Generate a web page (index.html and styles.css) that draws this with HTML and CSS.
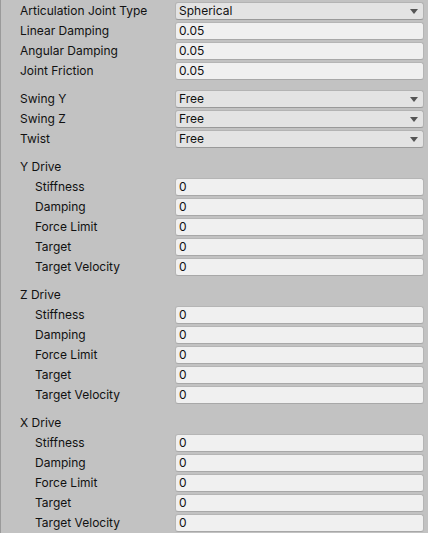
FILE: index.html
```html
<!DOCTYPE html>
<html>
<head>
<meta charset="utf-8">
<link rel="stylesheet" href="styles.css">
</head>
<body>
<div class="panel">
  <div class="group">
    <div class="row"><span class="label">Articulation Joint Type</span><div class="field drop"><span>Spherical</span><i class="arrow"></i></div></div>
    <div class="row"><span class="label">Linear Damping</span><div class="field"><span>0.05</span></div></div>
    <div class="row"><span class="label">Angular Damping</span><div class="field"><span>0.05</span></div></div>
    <div class="row"><span class="label">Joint Friction</span><div class="field"><span>0.05</span></div></div>
  </div>
  <div class="group">
    <div class="row"><span class="label">Swing Y</span><div class="field drop"><span>Free</span><i class="arrow"></i></div></div>
    <div class="row"><span class="label">Swing Z</span><div class="field drop"><span>Free</span><i class="arrow"></i></div></div>
    <div class="row"><span class="label">Twist</span><div class="field drop"><span>Free</span><i class="arrow"></i></div></div>
  </div>
  <div class="group">
    <div class="row"><span class="label">Y Drive</span></div>
    <div class="row sub"><span class="label">Stiffness</span><div class="field"><span>0</span></div></div>
    <div class="row sub"><span class="label">Damping</span><div class="field"><span>0</span></div></div>
    <div class="row sub"><span class="label">Force Limit</span><div class="field"><span>0</span></div></div>
    <div class="row sub"><span class="label">Target</span><div class="field"><span>0</span></div></div>
    <div class="row sub"><span class="label">Target Velocity</span><div class="field"><span>0</span></div></div>
  </div>
  <div class="group">
    <div class="row"><span class="label">Z Drive</span></div>
    <div class="row sub"><span class="label">Stiffness</span><div class="field"><span>0</span></div></div>
    <div class="row sub"><span class="label">Damping</span><div class="field"><span>0</span></div></div>
    <div class="row sub"><span class="label">Force Limit</span><div class="field"><span>0</span></div></div>
    <div class="row sub"><span class="label">Target</span><div class="field"><span>0</span></div></div>
    <div class="row sub"><span class="label">Target Velocity</span><div class="field"><span>0</span></div></div>
  </div>
  <div class="group">
    <div class="row"><span class="label">X Drive</span></div>
    <div class="row sub"><span class="label">Stiffness</span><div class="field"><span>0</span></div></div>
    <div class="row sub"><span class="label">Damping</span><div class="field"><span>0</span></div></div>
    <div class="row sub"><span class="label">Force Limit</span><div class="field"><span>0</span></div></div>
    <div class="row sub"><span class="label">Target</span><div class="field"><span>0</span></div></div>
    <div class="row sub"><span class="label">Target Velocity</span><div class="field"><span>0</span></div></div>
  </div>
</div>
</body>
</html>
```
FILE: styles.css
```css
html, body {
  margin: 0;
  padding: 0;
  background: #c2c2c2;
}
.panel {
  width: 428px;
  height: 533px;
  box-sizing: border-box;
  border-left: 1px solid #9a9a9a;
  background: #c2c2c2;
  font-family: Inter, "Noto Sans", sans-serif;
  font-size: 12px;
  color: #111111;
  display: flex;
  flex-direction: column;
  gap: 8px;
  padding-right: 4px;
}
.group {
  display: flex;
  flex-direction: column;
}
.row {
  height: 20px;
  display: flex;
  align-items: center;
}
.label {
  width: 174px;
  box-sizing: border-box;
  padding-left: 19px;
  white-space: nowrap;
  flex: none;
}
.sub .label {
  padding-left: 34px;
}
.field {
  flex: 1;
  height: 18px;
  box-sizing: border-box;
  margin-top: 1px;
  background: #f0f0f0;
  border: 1px solid #b5b5b5;
  border-bottom-color: #a8a8a8;
  border-radius: 3px;
  display: flex;
  align-items: center;
  padding-left: 3px;
  position: relative;
}
.drop {
  background: #e3e3e3;
  border-color: #b3b3b3;
  border-bottom-color: #999999;
}
.arrow {
  position: absolute;
  right: 5px;
  top: 6px;
  width: 0;
  height: 0;
  border-left: 4px solid transparent;
  border-right: 4px solid transparent;
  border-top: 5px solid #555555;
}
```
